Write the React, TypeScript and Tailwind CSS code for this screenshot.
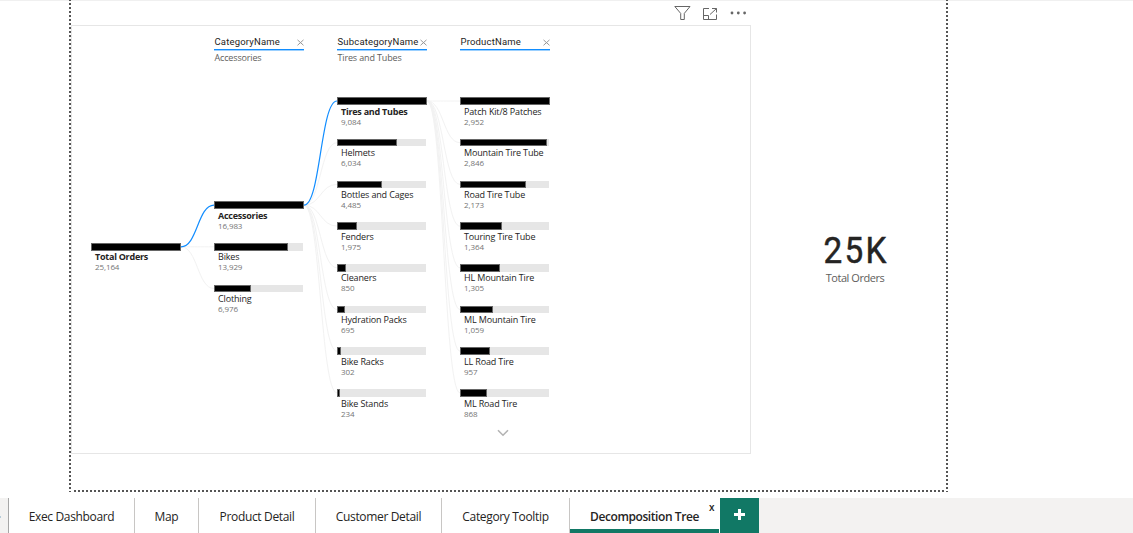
import React from "react";

type Item = { name: string; value: string; width: number; bold?: boolean };

const root: Item[] = [{ name: "Total Orders", value: "25,164", width: 90, bold: true }];

const categories: Item[] = [
  { name: "Accessories", value: "16,983", width: 90, bold: true },
  { name: "Bikes", value: "13,929", width: 74 },
  { name: "Clothing", value: "6,976", width: 37 },
];

const subcategories: Item[] = [
  { name: "Tires and Tubes", value: "9,084", width: 90, bold: true },
  { name: "Helmets", value: "6,034", width: 60 },
  { name: "Bottles and Cages", value: "4,485", width: 45 },
  { name: "Fenders", value: "1,975", width: 20 },
  { name: "Cleaners", value: "850", width: 9 },
  { name: "Hydration Packs", value: "695", width: 7.5 },
  { name: "Bike Racks", value: "302", width: 4 },
  { name: "Bike Stands", value: "234", width: 3 },
];

const products: Item[] = [
  { name: "Patch Kit/8 Patches", value: "2,952", width: 90 },
  { name: "Mountain Tire Tube", value: "2,846", width: 87 },
  { name: "Road Tire Tube", value: "2,173", width: 66 },
  { name: "Touring Tire Tube", value: "1,364", width: 42 },
  { name: "HL Mountain Tire", value: "1,305", width: 40 },
  { name: "ML Mountain Tire", value: "1,059", width: 32.5 },
  { name: "LL Road Tire", value: "957", width: 30 },
  { name: "ML Road Tire", value: "868", width: 27 },
];

const rowY = (i: number) => 101 + i * 41.7;

function link(x1: number, y1: number, x2: number, y2: number) {
  const mid = (x1 + x2) / 2;
  return `M${x1} ${y1}C${mid} ${y1} ${mid} ${y2} ${x2} ${y2}`;
}

function Links() {
  return (
    <svg className="pointer-events-none absolute left-0 top-0" width="1133" height="490" fill="none">
      <g stroke="#f2f2f2" strokeWidth="1">
        <path d={link(181, 246.8, 214, 246.8)} />
        <path d={link(181, 246.8, 214, 288.5)} />
        {subcategories.slice(1).map((s, i) => (
          <path key={s.name} d={link(304, 205.2, 337, rowY(i + 1))} />
        ))}
        {products.map((p, i) => (
          <path key={p.name} d={link(427, 101, 460, rowY(i))} />
        ))}
      </g>
      <g stroke="#118dff" strokeWidth="1.2">
        <path d={link(181, 246.8, 214, 205.2)} />
        <path d={link(304, 205.2, 337, 101)} />
      </g>
    </svg>
  );
}

function Node({ item }: { item: Item }) {
  return (
    <div className="h-[41.7px] w-[90px]">
      <div className="h-[7.5px] w-[89.4px] bg-[#e6e6e6]">
        <div className="h-full border border-[#666] bg-black" style={{ width: item.width }} />
      </div>
      <div
        className={
          item.bold
            ? "ml-1 mt-[0.9px] whitespace-nowrap text-[9px] font-bold leading-[11px] tracking-[-0.25px] text-[#252423]"
            : "ml-1 mt-[0.9px] whitespace-nowrap text-[9px] leading-[11px] tracking-[-0.15px] text-[#252423]"
        }
      >
        {item.name}
      </div>
      <div className="ml-1 text-[8px] leading-[9px] tracking-[-0.1px] text-[#757575]">{item.value}</div>
    </div>
  );
}

function Header({ title, selected }: { title: string; selected?: string }) {
  return (
    <div className="h-[63.3px] w-[90px] pt-[1px]">
      <div className="flex h-[14px] items-center justify-between whitespace-nowrap pl-[0.5px] font-['Roboto',sans-serif] text-[9.5px] tracking-[0.18px] text-[#252423]">
        <span>{title}</span>
        <svg width="7" height="7" viewBox="0 0 7 7" stroke="#999" strokeWidth="1" className="shrink-0">
          <path d="M.5 .9 6.5 6.3M6.5 .9 .5 6.3" />
        </svg>
      </div>
      <div className="h-[2px] border-b border-[#9bd0ff] bg-[#118dff]" />
      <div className="mt-[1px] pl-[0.5px] text-[9px] leading-[12px] tracking-[-0.15px] text-[#605e5c]">{selected}</div>
    </div>
  );
}

function Column({ title, selected, items, offset }: { title?: string; selected?: string; items: Item[]; offset?: string }) {
  return (
    <div className="flex w-[90px] flex-col">
      {title ? <Header title={title} selected={selected} /> : <div className="h-[63.3px]" />}
      <div className={offset}>
        {items.map((item) => (
          <Node key={item.name} item={item} />
        ))}
      </div>
    </div>
  );
}

function Toolbar() {
  return (
    <div className="flex h-[25px] w-[680px] items-start pl-[603px] pt-[5px]">
      <svg width="17" height="16" viewBox="0 0 17 16" fill="none" stroke="#666" strokeWidth="1">
        <path d="M.8 1.5H16L10.3 8.4V14.5H6.7V8.4Z" />
      </svg>
      <svg className="ml-[11px] mt-[1px]" width="16" height="15" viewBox="0 0 16 15" fill="none" stroke="#666" strokeWidth="1">
        <path d="M7 2.5H1.5V13.5H14.5V8.5M1.5 9.5H6.5V13.5M8 8.5 14.5 2.5M10 2.5H14.5V6.5" />
      </svg>
      <svg className="ml-[12px] mt-[6px]" width="17" height="4" viewBox="0 0 17 4" fill="#666">
        <circle cx="2" cy="2" r="1.4" />
        <circle cx="8.3" cy="2" r="1.4" />
        <circle cx="14.6" cy="2" r="1.4" />
      </svg>
    </div>
  );
}

const tabs = [
  { name: "Exec Dashboard", cell: "w-[126px]" },
  { name: "Map", cell: "w-[64px]" },
  { name: "Product Detail", cell: "w-[117px]" },
  { name: "Customer Detail", cell: "w-[126px]" },
  { name: "Category Tooltip", cell: "w-[128px]" },
];

function Tabs() {
  return (
    <div className="flex h-[35px] bg-[#f3f2f1] text-[12px] text-[#252423]">
      <div className="flex w-[9px] items-center border-r border-[#a6a6a6]">
        <div className="mt-[2px] h-[2px] w-[1px] bg-[#b5cbd8]" />
      </div>
      {tabs.map((t) => (
        <div key={t.name} className={`${t.cell} flex items-center justify-center whitespace-nowrap border-r border-[#c8c6c4] bg-white pt-[3px] tracking-[-0.34px]`}>
          {t.name}
        </div>
      ))}
      <div className="relative flex w-[149px] items-center justify-center border-b-4 border-[#117865] bg-white pt-[7px] font-semibold tracking-[-0.42px]">
        <span className="whitespace-nowrap">Decomposition Tree</span>
        <span className="absolute right-[5px] top-[3px] text-[10px] leading-[12px]">x</span>
      </div>
      <div className="flex w-[40px] items-center justify-center border-l border-white bg-[#117865] pb-[2px] pr-[1px]">
        <svg width="11" height="11" viewBox="0 0 11 11" stroke="#fff" strokeWidth="3">
          <path d="M0 5.5H11M5.5 0V11" />
        </svg>
      </div>
    </div>
  );
}

export default function App() {
  return (
    <div className="flex h-[533px] w-[1133px] flex-col overflow-hidden bg-white font-['Open_Sans','Noto_Sans',sans-serif]">
      <div className="relative flex h-[498px]">
        <Links />
        <svg className="pointer-events-none absolute left-0 top-0" width="1133" height="498" fill="none">
          <path d="M0 .5H1133" stroke="#f0f0f0" />
          <path d="M70 0V492M947 0V492" stroke="#555" strokeWidth="2" strokeDasharray="2 2" strokeDashoffset="1" />
          <path d="M74 491H946" stroke="#555" strokeWidth="2" strokeDasharray="2 2" />
        </svg>
        <main className="ml-[71px] w-[680px]">
          <Toolbar />
          <section className="flex h-[429px] gap-[33px] border border-[#e6e6e6] pl-[19px] pt-[8px]">
            <Column items={root} offset="pt-[145.8px]" />
            <Column title="CategoryName" selected="Accessories" items={categories} offset="pt-[104.1px]" />
            <Column title="SubcategoryName" selected="Tires and Tubes" items={subcategories} />
            <div className="flex flex-col">
              <Column title="ProductName" items={products} />
              <svg className="ml-[37px] mt-[-2px]" width="12" height="8" viewBox="0 0 12 8" fill="none" stroke="#b3b3b3" strokeWidth="1.6">
                <path d="M1 1.2 6 6.2 11 1.2" />
              </svg>
            </div>
          </section>
        </main>
        <aside className="ml-[4px] flex w-[200px] flex-col items-center pt-[230px]">
          <div className="scale-x-[.9] pl-[3px] font-['Roboto',sans-serif] text-[37px] leading-[42px] tracking-[2.5px] text-[#252423] [-webkit-text-stroke:0.5px_#252423]">25K</div>
          <div className="mt-[-1px] text-[11px] leading-[14px] tracking-[-0.45px] text-[#605e5c]">Total Orders</div>
        </aside>
      </div>
      <Tabs />
    </div>
  );
}
